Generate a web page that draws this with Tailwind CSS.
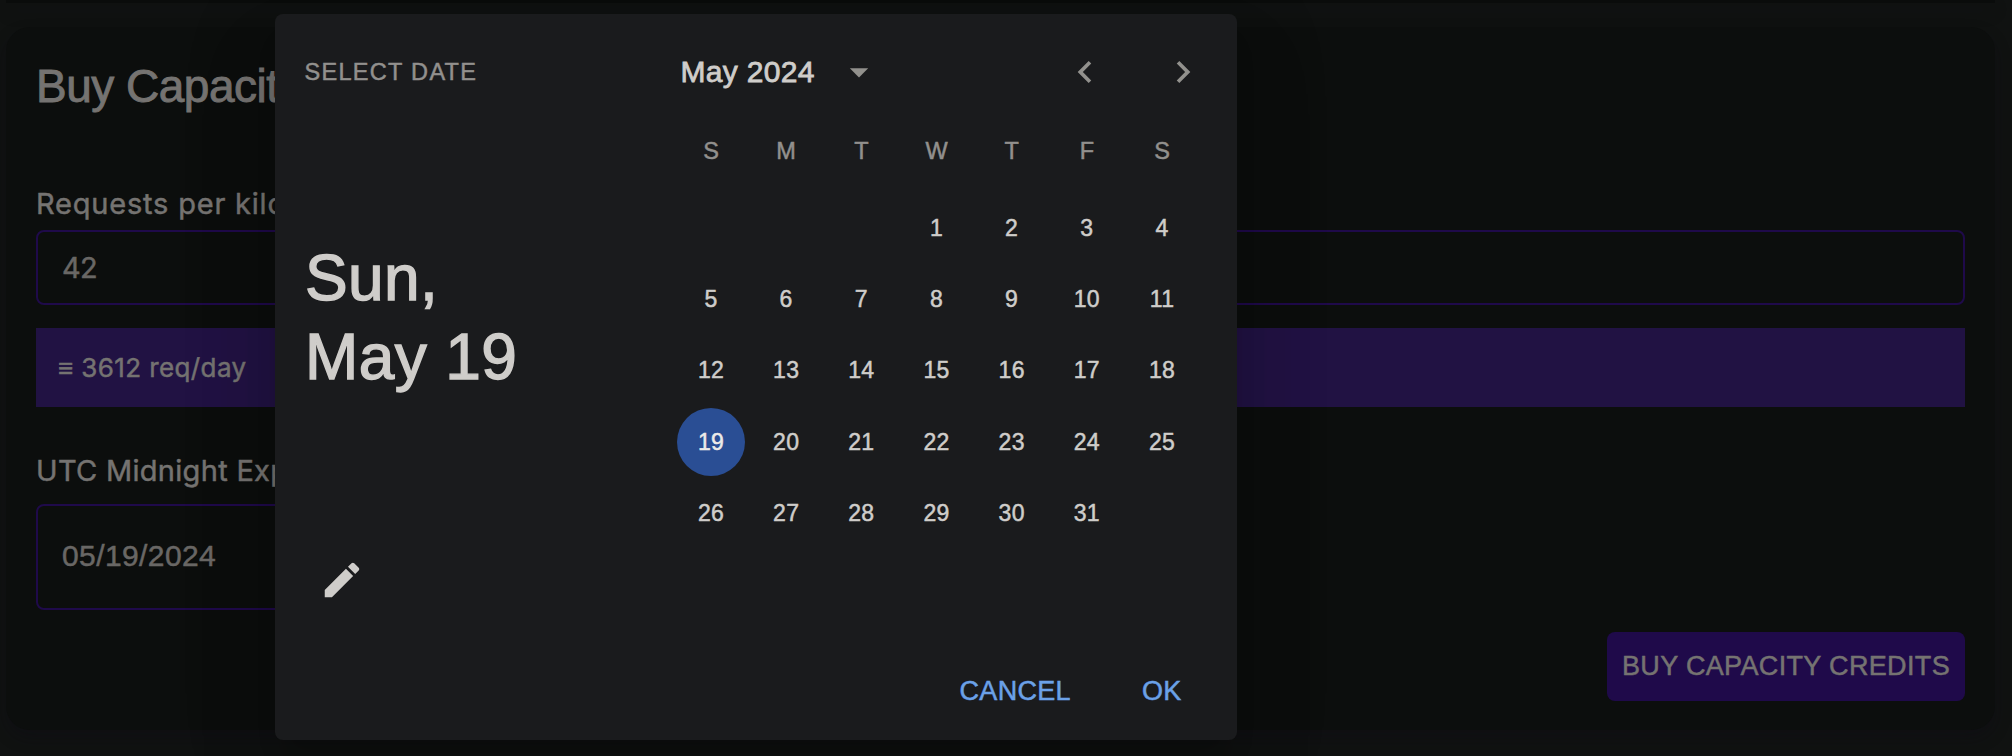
<!DOCTYPE html>
<html lang="en">
<head>
<meta charset="utf-8">
<title>Buy Capacity</title>
<script src="https://cdn.jsdelivr.net/npm/@tailwindcss/browser@4"></script>
</head>
<body class="relative h-[756px] w-[2012px] overflow-hidden bg-[#101211] font-['Liberation_Sans',sans-serif] text-[#757371] [-webkit-text-stroke:0.5px_currentColor]">
<div class="flex h-full flex-col pl-[6px] pr-[17px]">
  <section class="h-[3px] shrink-0 bg-[#0a0c0b] shadow-[0_8px_16px_rgba(12,10,24,0.3)]"></section>
  <main class="mt-6 flex h-[703px] shrink-0 flex-col rounded-3xl bg-[#0c0e0d] px-[30px] shadow-[0_8px_16px_rgba(12,10,24,0.3)]">
    <h1 class="mt-8 h-[54px] whitespace-nowrap text-[46px] leading-[54px] tracking-[-0.5px] text-[#757371] [-webkit-text-stroke:0.9px_currentColor]">Buy Capacity Credits</h1>
    <label class="mt-[73px] h-9 whitespace-nowrap font-['Inter',sans-serif] text-[29px] leading-9 tracking-[0.8px]">Requests per kilosecond</label>
    <div class="mt-[8px] flex h-[75px] items-center rounded-lg border-2 border-[#1f0a4a] pl-6 font-['Inter',sans-serif] text-[29px] tracking-[-0.7px] text-[#696765]">42</div>
    <div class="mt-[23px] flex h-[79px] items-center bg-[#211243] pl-[22px] font-['Inter',sans-serif] text-[26px] tracking-[0.4px] text-[#757371]">≡ 3612 req/day</div>
    <label class="mt-[46px] h-9 whitespace-nowrap font-['Inter',sans-serif] text-[29px] leading-9 tracking-[0.3px]">UTC Midnight Expiration Date</label>
    <div class="mt-[15px] flex h-[106px] w-[520px] items-center rounded-lg border-2 border-[#1f0a4a] pb-[3px] pl-6 text-[30px] tracking-[0.4px] text-[#696765]">05/19/2024</div>
    <button class="mt-[22px] flex h-[69px] w-[358px] items-center justify-center self-end whitespace-nowrap rounded-lg bg-[#1f0a4a] text-[27px] tracking-[0.35px]">BUY CAPACITY CREDITS</button>
  </main>
</div>

<!-- Date picker dialog -->
<div class="absolute left-[275px] top-[14px] flex h-[726px] w-[962px] flex-col rounded-lg bg-[#1a1b1d] text-[#cfcdca] shadow-[0_22px_30px_-14px_rgba(0,0,0,0.2),0_48px_76px_6px_rgba(0,0,0,0.12),0_18px_92px_16px_rgba(0,0,0,0.08)]">
  <div class="flex h-[622px]">
    <div class="flex w-[398px] flex-col pl-[29px]">
      <span class="mt-10 h-9 whitespace-nowrap pl-[0.5px] text-[23.5px] leading-9 tracking-[1.3px] text-[#92908d]">SELECT DATE</span>
      <h2 class="mt-[149px] pl-px text-[64px] leading-[79px] tracking-[0.4px] [-webkit-text-stroke:1.4px_currentColor]">Sun,<br>May 19</h2>
      <svg class="ml-[15px] mt-[160px] size-[46px]" viewBox="0 0 24 24" fill="#cfcdca"><path d="M3 17.25V21h3.75L17.81 9.94l-3.75-3.75L3 17.25zM20.71 7.04c.39-.39.39-1.02 0-1.41l-2.34-2.34a.9959.9959 0 0 0-1.41 0l-1.83 1.83 3.75 3.75 1.83-1.83z"/></svg>
    </div>
    <div class="w-[564px]">
      <div class="mt-9 flex h-11 items-center pl-[6px]">
        <span class="w-[158px] whitespace-nowrap pl-[1.5px] text-[30px] leading-9 tracking-[0.3px] [-webkit-text-stroke:0.8px_currentColor]">May 2024</span>
        <svg class="size-11" viewBox="0 0 24 24" fill="#92918d"><path d="M7 10l5 5 5-5z"/></svg>
        <svg class="ml-[182px] size-11" viewBox="0 0 24 24" fill="#92918d"><path d="M15.41 7.41L14 6l-6 6 6 6 1.41-1.41L10.83 12z"/></svg>
        <svg class="ml-[54px] size-11" viewBox="0 0 24 24" fill="#92918d"><path d="M8.59 16.59L13.17 12 8.59 7.41 10 6l6 6-6 6-1.41-1.41z"/></svg>
      </div>
      <div class="ml-[4px] mt-[23px] grid w-[519px] grid-cols-7 gap-x-[7.2px] text-center text-[23.5px] leading-[68px] text-[#92908d]">
        <span>S</span><span>M</span><span>T</span><span>W</span><span>T</span><span>F</span><span>S</span>
      </div>
      <div class="ml-[4px] mt-[9px] grid w-[519px] grid-cols-7 gap-x-[7.2px] gap-y-[3.2px] text-center text-[23px] leading-[68px] tracking-[0.3px]">
        <span class="col-start-4">1</span><span>2</span><span>3</span><span>4</span>
        <span>5</span><span>6</span><span>7</span><span>8</span><span>9</span><span>10</span><span>11</span>
        <span>12</span><span>13</span><span>14</span><span>15</span><span>16</span><span>17</span><span>18</span>
        <span class="rounded-full bg-[#2a4e94] text-[#eceae8]">19</span><span>20</span><span>21</span><span>22</span><span>23</span><span>24</span><span>25</span>
        <span>26</span><span>27</span><span>28</span><span>29</span><span>30</span><span>31</span>
      </div>
    </div>
  </div>
  <div class="flex h-[104px] justify-end gap-[71px] pr-[55.5px] pt-[37px] text-[27px] leading-[36px] tracking-[0.3px] text-[#6ba1e8]">
    <button class="h-9">CANCEL</button><button class="h-9">OK</button>
  </div>
</div>
</body>
</html>
